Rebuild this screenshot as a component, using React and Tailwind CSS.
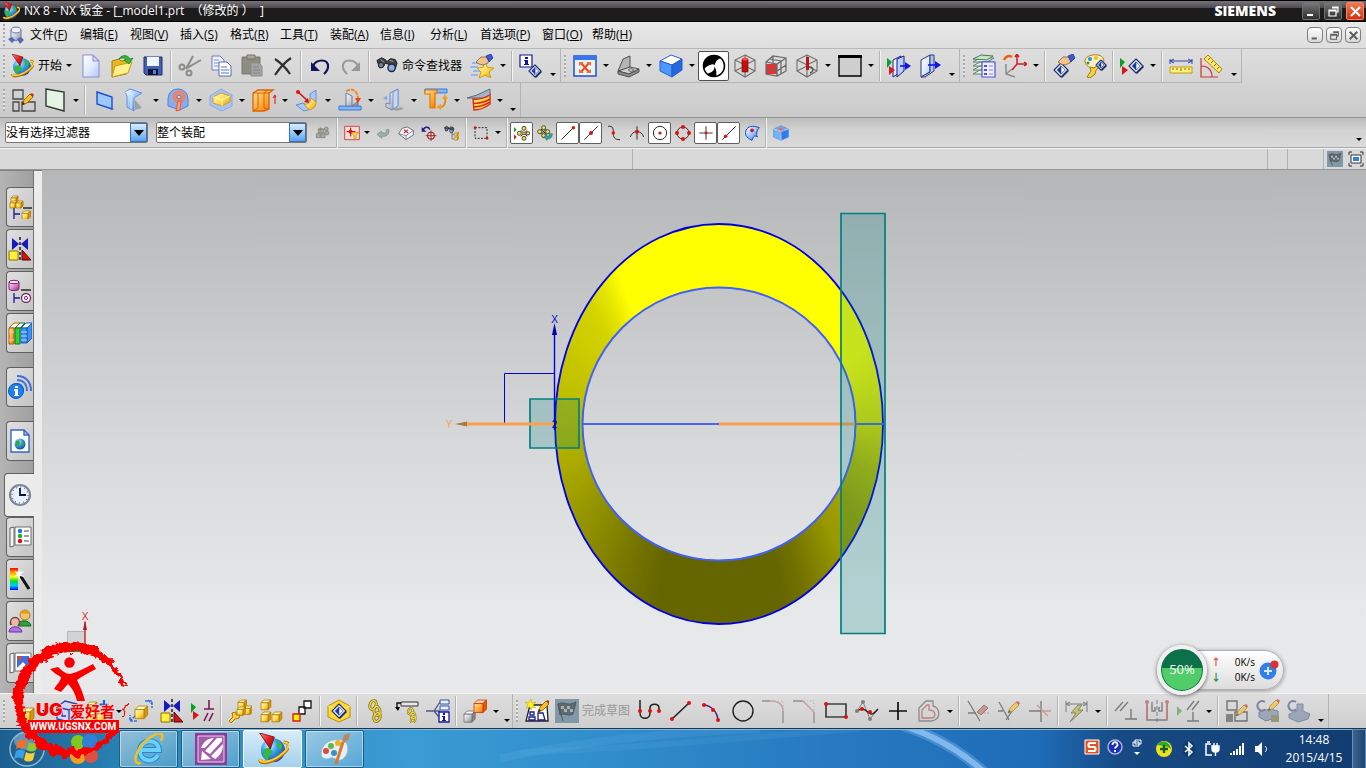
const NAVY = '#1a1a8c';
const UI = "font-['Open_Sans','Noto_Sans_CJK_SC',sans-serif]";

/* ---------- shared bits used by several icons ---------- */

function Defs() {
  const ramps = {
    gBlue: ['#ffffff', '#9cc4ff', '#2b6be8'],
    gPale: ['#ffffff', '#e4ecff', '#b4c6f4'],
    gGold: ['#fffbc0', '#ffe060', '#e09a00'],
    gOrange: ['#ffe6a8', '#ffb040', '#ee6f00'],
    gSteel: ['#ffffff', '#c8ccd4', '#7c8494'],
    gRed: ['#ff9080', '#e02020', '#8c0808'],
    gPink: ['#ffe4fa', '#e08cd0', '#8c2878'],
  };
  return (
    <svg width="0" height="0" className="absolute" aria-hidden="true">
      <defs>
        {Object.entries(ramps).map(([id, c]) => (
          <linearGradient key={id} id={id} x1="0" y1="0" x2="1" y2="1">
            <stop offset="0" stopColor={c[0]} />
            <stop offset=".5" stopColor={c[1]} />
            <stop offset="1" stopColor={c[2]} />
          </linearGradient>
        ))}
        <radialGradient id="gGlobe" cx=".35" cy=".3" r=".8">
          <stop offset="0" stopColor="#d8f4ff" />
          <stop offset=".4" stopColor="#3aa4f0" />
          <stop offset="1" stopColor="#0a3a9c" />
        </radialGradient>
        <linearGradient id="gRainbow" x1="0" y1="0" x2="0" y2="1">
          <stop offset="0" stopColor="#f00" />
          <stop offset=".2" stopColor="#f90" />
          <stop offset=".4" stopColor="#ff0" />
          <stop offset=".6" stopColor="#0d3" />
          <stop offset=".8" stopColor="#0cf" />
          <stop offset="1" stopColor="#00f" />
        </linearGradient>
      </defs>
    </svg>
  );
}

function Cube({ x, y, w = 7, top = '#fffbc0', front = 'url(#gGold)', side = '#d89410', line = '#b07800' }) {
  const d = w * 0.4;
  return (
    <g stroke={line} strokeWidth=".8" strokeLinejoin="round">
      <path d={`M${x} ${y + d}l${d} ${-d}h${w}l${-d} ${d}z`} fill={top} />
      <path d={`M${x + w} ${y + d}l${d} ${-d}v${w}l${-d} ${d}z`} fill={side} />
      <path d={`M${x} ${y + d}h${w}v${w}h${-w}z`} fill={front} />
    </g>
  );
}

function WireIso() {
  return (
    <path d="M12 1l10 5v11l-10 6-10-6V6zM2 6l10 5 10-5M12 11v12M2 17l10-5 10 5M12 1v11" fill="none" stroke="#6c6c6c" strokeWidth="1.1" />
  );
}

function Diamond({ x = 12, y = 12, r = 8 }) {
  return (
    <g transform={`translate(${x} ${y})`} strokeLinejoin="round">
      <path d={`M${-r} 0L0 ${-r}l${r} ${r}l${-r} ${r}z`} fill="#e8eeff" stroke="#20306c" strokeWidth="1.1" />
      <path d={`M${-r * 0.6} 0L0 ${-r * 0.6}v${r * 1.2}z`} fill="#1c3c9c" />
      <path d={`M${r * 0.6} 0L0 ${-r * 0.6}v${r * 1.2}z`} fill="#fff" stroke="#1c3c9c" strokeWidth=".7" />
      <path d={`M0 ${r}l${r} ${-r}l1 1l${-r} ${r}z`} fill="#20306c" />
    </g>
  );
}

function Pencil({ x = 10, y = 1 }) {
  return (
    <g transform={`translate(${x} ${y})`}>
      <path d="M0 12l2-5 6-6 3 3-6 6z" fill="#f8c020" stroke="#8a5400" strokeWidth=".8" />
      <path d="M8 1l2-1 2 2-1 2z" fill="#c03020" />
      <path d="M0 12l1-3 2 2z" fill="#202020" />
    </g>
  );
}

function Dot({ x, y, r = 2, c = '#e01010' }) {
  return <circle cx={x} cy={y} r={r} fill={c} />;
}

function NxGlobe() {
  return (
    <>
      <circle cx="12" cy="13" r="9" fill="url(#gGlobe)" />
      <path d="M5 12l4-1 3 3-3 3-1 4-3-3zM15 5l4 4-1 4-3-3z" fill="#36b83c" />
      <path d="M2 20C3 24 12 22 19 16s5-9 1-9" fill="none" stroke="#b87000" strokeWidth="2.600" />
      <path d="M2 20C3 23 12 21.500 19 15.500s5-8 1-8.500" fill="none" stroke="#ffce3c" strokeWidth="1.500" />
      <path d="M2 0l11 3-3 9z" fill="url(#gRed)" stroke="#7c0410" strokeWidth=".6" />
    </>
  );
}

const Binoculars = () => (
  <>
    <path d="M1 6l5-3 4 2 2 2 4-3 5 1 2 4-2 6-4 2-3-3v-4l-4-1-2 4-4 1z" fill="#3c4048" stroke="#181818" />
    <circle cx="17" cy="14" r="4" fill="#8cacf0" stroke="#202838" strokeWidth="1.500" />
    <circle cx="5.500" cy="11" r="3" fill="#6c7c9c" stroke="#202020" />
    <path d="M5 5l4 3M15 6l4 1" stroke="#b0b8c0" />
  </>
);

const Hand = ({ x = 0, y = 0 }) => (
  <g transform={`translate(${x} ${y})`}>
    <path d="M0 8l5-5h5l3 2-1 4-5 2-4-1z" fill="#f0c48c" stroke="#8c5c2c" strokeWidth=".8" />
    <path d="M10 2l5-2 2 4-4 4z" fill="#3c58d8" stroke="#182c8c" strokeWidth=".7" />
  </g>
);

const Triangles = ({ x = 0, y = 3 }) => (
  <g transform={`translate(${x} ${y})`}>
    <path d="M0 0l5 4-5 6z" fill="#08a028" />
    <path d="M2 8l6 4-6 5z" fill="#d81818" />
  </g>
);

const Mirror = () => (
  <>
    <path d="M4 1l7 6-7 6zM20 1l-7 6 7 6z" fill="#1818c0" />
    <path d="M12 0v24" stroke="#101010" strokeDasharray="3 2" strokeWidth="1.400" />
    <path d="M1 14h9v9H1z" fill="#fff03c" stroke="#8c7000" />
    <path d="M14 13v10h9z" fill="#d01414" stroke="#600" />
  </>
);

const Chain = () => (
  <g fill="none" stroke="#8c7400" strokeWidth="3">
    <ellipse cx="9" cy="6" rx="3" ry="4.500" transform="rotate(20 9 6)" />
    <ellipse cx="13" cy="12" rx="3" ry="4.500" transform="rotate(-10 13 12)" />
    <ellipse cx="13" cy="18" rx="3" ry="4.500" transform="rotate(20 13 18)" />
    <g stroke="#ecd858" strokeWidth="1.400">
      <ellipse cx="9" cy="6" rx="3" ry="4.500" transform="rotate(20 9 6)" />
      <ellipse cx="13" cy="12" rx="3" ry="4.500" transform="rotate(-10 13 12)" />
      <ellipse cx="13" cy="18" rx="3" ry="4.500" transform="rotate(20 13 18)" />
    </g>
  </g>
);

/* ---------- icon drawings, all on a 24 grid ---------- */

const ICONS = {
  new: <path d="M4 1h10l6 6v16H4zM14 1v6h6" fill="url(#gPale)" stroke="#8c94d8" strokeWidth="1.100" />,
  open: (
    <>
      <path d="M2 7l7-2 2 2 7-1v4l-2 10-14 3z" fill="#e8b820" stroke="#a07c08" />
      <path d="M5 12l17-4-4 11-16 4z" fill="#fff08c" stroke="#c49c18" />
      <path d="M9 5c3-5 9-4 11 0l3-1-4 6-5-4 2-.5c-2-2-4-2-7-.5z" fill="#38b838" stroke="#107818" strokeWidth=".7" />
    </>
  ),
  save: (
    <>
      <path d="M3 3h18v18H5l-2-2z" fill="#4460b4" stroke="#202c6c" />
      <path d="M6 3h12v9H6z" fill="#f0f4ff" />
      <path d="M7 15h10v6H7z" fill="#101828" />
      <path d="M12 16h3v4h-3z" fill="#4c80e8" />
    </>
  ),
  cut: (
    <g fill="none" stroke="#8c8c84" strokeWidth="2">
      <path d="M8 15L15 2M9 14l14-8" />
      <circle cx="4" cy="13" r="2.500" />
      <circle cx="11" cy="19" r="2.500" />
    </g>
  ),
  copy: (
    <>
      <path d="M3 2h8l4 4v10H3z" fill="#eef2ff" stroke="#6c7cc0" />
      <path d="M5 6h5M5 9h8M5 12h8" stroke="#8494d0" />
      <path d="M10 8h8l4 4v10H10z" fill="#fff" stroke="#5c6cb8" />
      <path d="M12 13h6M12 16h8M12 19h8" stroke="#4c70d8" />
    </>
  ),
  paste: (
    <>
      <path d="M2 3h18v17H2z" fill="#8c8c80" stroke="#787870" />
      <path d="M7 1h8v4H7z" fill="#a8a89c" stroke="#74746c" />
      <path d="M11 9h8l3 3v10H11z" fill="#a4a4a4" stroke="#8c8c8c" />
      <path d="M13 13h6M13 16h7M13 19h7" stroke="#848484" />
    </>
  ),
  delete: <path d="M4 5c6 4 11 9 15 15M20 4C14 8 8 15 4 21" fill="none" stroke="#303030" strokeWidth="2.200" />,
  undo: (
    <>
      <path d="M5 12c3-7 16-8 15 1 0 3-2 5-4 7" fill="none" stroke="#14145c" strokeWidth="2.200" />
      <path d="M3 8v9h9z" fill="#14145c" />
    </>
  ),
  redo: (
    <>
      <path d="M19 12c-3-7-16-8-15 1 0 3 2 5 4 7" fill="none" stroke="#989898" strokeWidth="2" />
      <path d="M21 8v9h-9z" fill="#989898" />
    </>
  ),
  finder: <Binoculars />,
  role: (
    <>
      <path d="M2 9h9M0 13h8M3 17h7M1 21h7" stroke="#7cb0f0" strokeWidth="1.600" />
      <path d="M15 8l2.500 5.500 6.500.5-5 4 2 6-6-3-6 3 2-6-4-4 6-.5z" fill="url(#gGold)" stroke="#d09c10" />
      <Hand x={6} />
    </>
  ),
  info: (
    <>
      <path d="M1 1h12v12H1z" fill="#fff" stroke="#14149c" strokeWidth="1.200" />
      <path d="M6 3h3v2H6zM5 6h4v4h1v1H5v-1h1V7H5z" fill="#14149c" />
      <Diamond x={16} y={17} r={6} />
    </>
  ),
  fit: (
    <>
      <path d="M1 2h22v20H1z" fill="#eaf2ff" stroke="#2450c8" strokeWidth="1.500" />
      <path d="M1 2h22v4H1z" fill="#3c74ec" />
      <path d="M8 9l8 9M16 9l-8 9" stroke="#e85010" strokeWidth="2" />
      <path d="M6 8h5l-5 4zM18 8h-5l5 4zM6 19h5l-5-4zM18 19h-5l5-4z" fill="#f07028" />
    </>
  ),
  orient: (
    <>
      <path d="M2 17L7 5l7-3v11l-8 5z" fill="#b4b4b4" stroke="#505050" />
      <path d="M2 17l12-4 9 2-10 5z" fill="#d0d0d0" stroke="#505050" />
      <path d="M2 17v3l11 3 10-5v-3l-10 5z" fill="#8c8c8c" stroke="#505050" />
      <ellipse cx="15" cy="16" rx="2.500" ry="1.200" fill="#fff" stroke="#505050" />
    </>
  ),
  blueCube: (
    <g stroke="#2c5cd0" strokeLinejoin="round">
      <path d="M1 7l11-6 11 4-10 6z" fill="#fff" />
      <path d="M1 7l12 4v12L1 17z" fill="#4c98ff" />
      <path d="M23 5L13 11v12l10-7z" fill="#2468e0" />
    </g>
  ),
  shaded: (
    <>
      <circle cx="12" cy="12" r="10.500" fill="#fff" stroke="#000" strokeWidth="1.500" />
      <path d="M19 4C14 6 13 9 13 11 10 9 5 12 2 15-1 7 5 1 12 1.500c3 0 5 1 7 2.500zM12 12c1 3 0 6-7 8 3 3 7 3 9 2 1-4 0-7-2-10z" fill="#000" />
    </>
  ),
  bore1: (
    <>
      <WireIso />
      <path d="M9 5h6v13H9z" fill="#c41010" stroke="#700" strokeWidth=".6" />
      <ellipse cx="12" cy="5" rx="3" ry="1.500" fill="#f05040" />
    </>
  ),
  bore2: (
    <>
      <path d="M2 10h11v10H2z" fill="#e83030" />
      <path d="M2 8l7-6 13 2v13l-9 5-11-2zM2 8l11 2 9-6M13 10v12M6 5l11 2v13M22 11l-9 6-11-2M9 2v12" fill="none" stroke="#686868" strokeWidth="1.200" />
    </>
  ),
  bore3: (
    <>
      <WireIso />
      <path d="M11 3h3v13h-3z" fill="#c41010" />
      <path d="M14 13c5-1 5 5 1 6" fill="none" stroke="#555" strokeWidth="1.300" />
    </>
  ),
  backdrop: (
    <>
      <path d="M1 2h22v20H1z" fill="#cfcfcf" stroke="#000" strokeWidth="1.300" />
      <path d="M0 1h24v3H0z" />
    </>
  ),
  clipToggle: (
    <>
      <path d="M6 6l8-4v16l-8 5z" fill="url(#gPale)" stroke={NAVY} />
      <path d="M10 5l7-3v15l-7 6z" fill="#b8d0fc" stroke={NAVY} />
      <path d="M13 12h6" stroke="#1414e0" strokeWidth="1.600" />
      <path d="M18 8l6 4-6 4z" fill="#1414e0" />
      <Triangles y={4} />
    </>
  ),
  clipEdit: (
    <>
      <path d="M3 6l9-5v17l-9 5z" fill="url(#gPale)" stroke="#303870" />
      <path d="M12 1h4v16l-9 6H3l9-5z" fill="#a8c8fc" stroke="#303870" />
      <path d="M10 11h9" stroke="#1414e0" strokeWidth="1.600" />
      <path d="M17 7l6 4-6 4z" fill="#1414e0" />
    </>
  ),
  layers: (
    <>
      <path d="M1 20l7-4h14l-7 4zM1 16l7-4h14l-7 4zM1 12l7-4h14l-7 4zM1 8l7-4h14l-7 4z" fill="#eaf4ea" stroke="#60846c" />
      <path d="M1 5l8-4 12 1-6 4z" fill="#c4e4c8" stroke="#4c7858" />
      <path d="M10 8h13v15H10z" fill="#eef0ff" stroke="#5050e0" strokeWidth="1.200" />
      <path d="M12 11h3v2h-3zM12 15h3v2h-3zM12 19h3v2h-3z" fill="#5050e0" />
      <path d="M17 12h4M17 16h4M17 20h4" stroke="#8080d0" />
    </>
  ),
  csys: (
    <g fill="none" strokeWidth="1.500">
      <path d="M3 10v10l9 3M3 20l6-5" stroke="#8c8c8c" />
      <path d="M14 1v9h9M14 10l-5 6M12 3l2-3 2 3M21 8l3 2-3 2" stroke="#d02020" />
      <path d="M1 6c2-4 5-5 8-3" stroke="#f06010" strokeWidth="2.500" />
    </g>
  ),
  showHide: (
    <>
      <Diamond x={9} y={16} r={7} />
      <Hand x={6} y={0} />
    </>
  ),
  palette: (
    <>
      <path d="M2 8C1 3 8 0 15 1c6 1 8 7 3 9-3 1-3 4-7 4S3 12 2 8z" fill="#fff0c0" stroke="#b07810" />
      <Dot x={7} y={5} c="#2090f0" />
      <Dot x={13} y={4} c="#f0c010" />
      <Dot x={5} y={9} r={1.5} c="#20a040" />
      <path d="M4 23l4-6-1-4 4 1 5-4 2 2-5 4-1 4-5 4z" fill="#f8d040" stroke="#a07c08" />
      <Diamond x={18} y={11} r={5} />
    </>
  ),
  immediate: (
    <>
      <Triangles y={4} />
      <Diamond x={16} y={12} r={7} />
    </>
  ),
  ruler: (
    <>
      <path d="M1 7h22M1 5v5M23 5v5M5 5L1 7l4 2M19 5l4 2-4 2" fill="none" stroke="#2c48a8" />
      <path d="M1 13h22v6H1z" fill="#fff07c" stroke="#c49c10" />
      <path d="M4 14v2M8 14v2M12 14v3M16 14v2M20 14v2" stroke="#80640c" />
    </>
  ),
  angle: (
    <>
      <path d="M1 4v19h17M1 12c7 0 11 4 11 11" fill="none" stroke="#d03434" strokeWidth="1.200" />
      <path d="M8 1l14 14-3 4L4 5z" fill="#ffe868" stroke="#a8840c" />
      <path d="M10 4l-2 2M13 7l-2 2M16 10l-2 2M19 13l-2 2" stroke="#80640c" />
    </>
  ),
  /* sheet metal row */
  sketchTask: (
    <>
      <path d="M1 2h10v9H1zM1 14h6v9H1zM10 14h13v9H10z" fill="none" stroke="#484848" strokeWidth="1.300" />
      <Pencil x={10} y={5} />
    </>
  ),
  sheet: <path d="M3 1l18 3v19L3 18z" fill="#e4f4e4" stroke="#303830" strokeWidth="1.400" />,
  tab: (
    <>
      <path d="M20 20l3 1-5 2z" fill="#a8a8a8" />
      <path d="M5 4l15 5v12L5 16z" fill="#9cc8ff" stroke="#1c50d0" strokeWidth="1.400" />
    </>
  ),
  contourFlange: (
    <>
      <path d="M12 12l7 8-7 2z" fill="#a0a0a0" />
      <path d="M2 4l5-3 12 4-5 3c-3 1-3 3-3 5v10l-7-4V8z" fill="url(#gBlue)" stroke="#5c94e0" />
      <path d="M2 4l8 3c-1 1-2 2-2 5v9" fill="none" stroke="#e0ecff" />
    </>
  ),
  dimple: (
    <>
      <path d="M2 12C2 4 7 1 12 1s10 3 10 11v6l-8 4-12-4z" fill="#88acf0" stroke="#5480d8" />
      <circle cx="13" cy="9" r="5" fill="none" stroke="#f08060" strokeWidth="3" />
      <path d="M12 13l-2 10 4-1 1-9z" fill="#ffa078" stroke="#e05c30" />
      <circle cx="13" cy="9" r="2" fill="#ffd0b0" stroke="#d04818" />
    </>
  ),
  emboss: (
    <>
      <path d="M1 8l11-7 11 6v11l-10 5-12-6z" fill="#a8c4f4" stroke="#88a8e4" />
      <path d="M4 9l8-4 9 3v6l-8 4-9-3z" fill="url(#gGold)" stroke="#d0a020" />
      <path d="M4 9l9 3 8-4M13 12v6" fill="none" stroke="#fff8b0" />
    </>
  ),
  louver: (
    <>
      <path d="M1 5l5-3h15l-4 3v16l-5 2H1z" fill="url(#gOrange)" stroke="#e06000" strokeWidth="1.300" />
      <path d="M6 5v15l-5 3M12 5v15l5 1M1 5h16M12 5l4-3" fill="none" stroke="#e06000" />
      <path d="M23 8v8M21 10l2-3 1 3" stroke="#e01010" fill="none" />
    </>
  ),
  bend: (
    <>
      <path d="M1 17l7-2 8 6-7 2zM15 6l6-4v12l-6 5z" fill="#a8c8f8" stroke="#6090d8" />
      <path d="M9 16c4 1 6-1 7-6l5 4c0 5-3 7-7 8z" fill="url(#gGold)" stroke="#d89020" />
      <path d="M3 4l10 9" stroke="#d81010" strokeWidth="1.600" />
      <Dot x={3} y={4} />
      <path d="M14 15l-5-1 4-4z" fill="#d81010" />
    </>
  ),
  jog: (
    <>
      <path d="M1 18h22v4H1z" fill="#80b4f8" stroke="#3c78d8" />
      <path d="M8 18V5l6 3v10zM14 18l6-5v5z" fill="url(#gSteel)" stroke="#6c7c98" />
      <path d="M8 3c6-3 12-1 12 8" fill="none" stroke="#f08010" strokeWidth="1.800" strokeDasharray="4 1" />
      <path d="M17 10h6l-3 5z" fill="#f04010" />
    </>
  ),
  corner: (
    <>
      <path d="M12 21l8-2 3 2-8 2z" fill="#a0a0a0" />
      <path d="M9 5l8-4v17l-6 4-6-3v-4l4 1z" fill="url(#gSteel)" stroke="#7488b0" />
      <path d="M12 4l5-3v17l-5 3z" fill="#c4d8f8" stroke="#7898d0" />
      <path d="M2 10l4-2v4z" fill="#70a4f0" />
    </>
  ),
  unbend: (
    <>
      <path d="M1 1h22v4H1z" fill="#80b4f8" stroke="#3c78d8" />
      <path d="M1 2h12v3h-2v15H6V6H1z" fill="url(#gOrange)" stroke="#e07800" strokeWidth="1.200" />
      <path d="M15 19c5 1 7-4 6-9" fill="none" stroke="#e88c10" strokeWidth="2" />
      <path d="M18 11l3-5 3 5zM17 16v6l-5-3z" fill="#f0a020" />
    </>
  ),
  formed: (
    <>
      <path d="M0 10l10-3L23 1v6l-7 3z" fill="#a4b4c4" stroke="#58687c" />
      <path d="M6 11c7 1 12-1 17-4v9c-5 4-10 6-16 6z" fill="#ffe050" stroke="#e02818" strokeWidth="1.400" />
      <path d="M6 15c7 1 12-1 17-4M6 19c7 0 12-2 17-5" fill="none" stroke="#e02818" strokeWidth="1.500" />
    </>
  ),
  /* selection bar */
  interpart: (
    <g fill="#a8a8a0" stroke="#787870">
      <path d="M5 6h8v6H5zM2 13h6v6H2zM9 13h6v6H9zM8 3v6M5 6h7" />
      <circle cx="17" cy="6" r="3" />
      <circle cx="18" cy="12" r="3" />
    </g>
  ),
  filter: (
    <>
      <path d="M1 2h22v20H1z" fill="#f8dada" stroke="#d84040" strokeWidth="1.400" />
      <path d="M10 4v13M4 10h13" stroke="#900" strokeWidth="1.500" />
      <Dot x={10} y={10} r={3} />
      <path d="M11 11h11l-4 5v6l-3-2v-4z" fill="#ffd040" stroke="#b08000" strokeWidth=".8" />
    </>
  ),
  resetFilter: <path d="M3 14l7-5v3h7V7h4c0 8-3 10-11 10v3z" fill="#9cb4ac" stroke="#70887c" />,
  deselect: (
    <>
      <path d="M1 13L6 5l8-2 9 5v7l-11 7z" fill="#f0f2f8" stroke="#5c6474" strokeWidth="1.300" />
      <path d="M1 13l11 3 11-8M12 16v6" fill="none" stroke="#5c6474" />
      <path d="M9 12l6-5M9 7l6 5" stroke="#d02020" strokeWidth="1.600" />
    </>
  ),
  allowLimit: (
    <>
      <path d="M3 8c2-6 9-6 10-1" fill="none" stroke={NAVY} strokeWidth="2" />
      <path d="M1 3v7h7z" fill={NAVY} />
      <circle cx="15" cy="16" r="5" fill="none" stroke="#c01818" strokeWidth="1.600" />
      <path d="M15 8v16M7 16h16" stroke="#802020" strokeWidth="1.300" />
    </>
  ),
  findTree: (
    <>
      <g transform="scale(.65)">
        <Binoculars />
      </g>
      <path d="M12 10v11h4M12 14h4" fill="none" stroke="#4c4c8c" />
      <Cube x={16} y={11} w={4} />
      <Cube x={16} y={17} w={4} />
    </>
  ),
  marquee: (
    <>
      <path d="M3 4h18v16H3z" fill="none" stroke="#202020" strokeWidth="1.400" strokeDasharray="3 2" />
      <Dot x={3} y={4} />
      <Dot x={21} y={20} />
    </>
  ),
  snapOn: (
    <>
      <path d="M0 3l4 4-4 4z" fill="#08a028" />
      <path d="M0 14l4 4-4 4z" fill="#d81818" />
      <g fill="#f8e040" stroke="#202020" strokeWidth="1.200">
        <circle cx="15" cy="5" r="3" />
        <circle cx="15" cy="20" r="3" />
        <circle cx="8" cy="12.500" r="3" />
        <circle cx="21" cy="12.500" r="2.500" />
      </g>
      <path d="M10 8l10 9M20 8L10 17" stroke="#202020" strokeWidth="1.500" />
      <circle cx="15" cy="12.500" r="2" fill="#ffe040" stroke="#303030" />
    </>
  ),
  snapReset: (
    <>
      <g fill="#f8e040" stroke="#303030" strokeWidth="1.200">
        <circle cx="10" cy="4" r="3" />
        <circle cx="4" cy="10" r="3" />
        <circle cx="16" cy="10" r="3" />
        <circle cx="10" cy="16" r="3" />
      </g>
      <path d="M6 6l8 8M14 6l-8 8" stroke="#303030" strokeWidth="1.500" />
      <path d="M10 18l5-4v3h3v-4h5c0 6-3 8-8 8v2z" fill="#40a0a0" stroke="#206c6c" strokeWidth=".8" />
    </>
  ),
  endPoint: (
    <>
      <path d="M2 22L20 4" stroke="#303030" strokeWidth="1.500" />
      <Dot x={20} y={4} r={2.6} />
    </>
  ),
  midPoint: (
    <>
      <path d="M2 22L22 2" stroke="#303030" strokeWidth="1.500" />
      <Dot x={12} y={12} r={3} />
    </>
  ),
  control: (
    <>
      <path d="M3 2c8-1 8 4 8 10s1 10 10 10" fill="none" stroke="#303030" strokeWidth="1.500" />
      <Dot x={11} y={12} r={2.6} />
    </>
  ),
  intersection: (
    <>
      <path d="M12 2v20M2 18C5 7 19 7 22 18" fill="none" stroke="#303030" strokeWidth="1.500" />
      <Dot x={12} y={10} r={3} />
    </>
  ),
  arcCenter: (
    <>
      <circle cx="12" cy="12" r="10" fill="none" stroke="#303030" strokeWidth="1.500" />
      <Dot x={12} y={12} r={2.4} />
    </>
  ),
  quadrant: (
    <>
      <circle cx="12" cy="12" r="9" fill="none" stroke="#303030" strokeWidth="1.500" />
      <Dot x={12} y={3} r={3} />
      <Dot x={12} y={21} r={3} />
      <Dot x={3} y={12} r={3} />
      <Dot x={21} y={12} r={3} />
    </>
  ),
  existing: (
    <>
      <path d="M12 2v20M2 12h20" stroke="#404040" strokeWidth="1.600" />
      <Dot x={12} y={12} r={2.2} />
    </>
  ),
  onCurve: (
    <>
      <path d="M2 22L22 2" stroke="#303030" strokeWidth="1.500" />
      <Dot x={7} y={17} r={2.6} />
    </>
  ),
  onFace: (
    <>
      <path d="M4 6c5-6 13-4 19-2-4 4-5 9-3 14-4-3-6-1-8 5C3 19 0 13 4 6z" fill="url(#gBlue)" stroke="#1c48b8" strokeWidth="1.500" />
      <Dot x={12} y={8} r={2.8} />
    </>
  ),
  facet: (
    <>
      <path d="M1 6l11-5 11 5v12l-11 5-11-5z" fill="#70b4f8" stroke="#5090d8" />
      <path d="M12 10l11-4v12l-11 5z" fill="#2c7cf0" />
      <path d="M1 6l11 4 11-4M12 10v13" fill="none" stroke="#d8e8ff" />
      <path d="M6 4l12 5M18 4L6 8M12 2v14" stroke="#e06060" />
    </>
  ),
  /* resource bar tabs */
  asmNav: (
    <>
      <Cube x={3} y={1} w={5} />
      <Cube x={2} y={6} w={5} />
      <Cube x={8} y={6} w={5} />
      <path d="M15 13h9" stroke="#000" strokeWidth="1.200" />
      <path d="M6 13v11M6 19h6" stroke={NAVY} strokeWidth="1.300" />
      <Cube x={14} y={16} w={6} />
    </>
  ),
  constraintNav: <Mirror />,
  partNav: (
    <>
      <path d="M1 3v7c0 2 10 2 10 0V3z" fill="url(#gPink)" stroke="#7c2468" />
      <ellipse cx="6" cy="3" rx="5" ry="1.700" fill="#ffe0f8" stroke="#7c2468" />
      <path d="M13 11h10" stroke="#000" strokeWidth="1.200" />
      <path d="M6 14v10M6 19h6" stroke={NAVY} strokeWidth="1.300" />
      <circle cx="18" cy="19" r="4.500" fill="#fff" stroke="#7c2468" strokeWidth="1.300" />
      <circle cx="18" cy="19" r="1.600" fill="none" stroke="#7c2468" />
    </>
  ),
  library: (
    <>
      <path d="M1 7l5-5h6L7 7z" fill="#fff" stroke="#c86000" />
      <path d="M1 7h5v16H1z" fill="url(#gOrange)" stroke="#b85800" />
      <path d="M7 7l5-5h5l-5 5z" fill="#fff" stroke="#107818" />
      <path d="M7 7h5v16H7z" fill="#30d038" stroke="#107818" />
      <path d="M13 7l5-5h6l-5 5z" fill="#fff" stroke="#1860b8" />
      <path d="M13 7h6v15h-6zM19 7l5-5v15l-5 5z" fill="#3c90f0" stroke="#1860b8" />
      <path d="M1 11h5M1 19h5M13 11h6M13 15h6M13 19h6" stroke="#c0d8f8" />
    </>
  ),
  hdInfo: (
    <>
      <path d="M9 1c9 0 14 6 14 15M9 5c6 0 10 4 10 11M9 9c4 0 6 2 6 7" fill="none" stroke="#4070d8" strokeWidth="2" />
      <circle cx="8" cy="16" r="7.500" fill="#1c80f0" stroke="#1058b8" />
      <path d="M7 11h3v2H7zM6 14h4v6h1v1H6v-1h1v-4H6z" fill="#fff" />
    </>
  ),
  browser: (
    <>
      <path d="M3 1h13l5 5v17H3zM16 1v5h5" fill="#fff" stroke="#3464c8" strokeWidth="1.400" />
      <circle cx="12" cy="15" r="5.500" fill="url(#gGlobe)" />
      <path d="M8 12l3-1 1 3-2 4-2-2zM14 12l3 2-2 4z" fill="#38a838" />
    </>
  ),
  history: (
    <>
      <circle cx="12" cy="12" r="10" fill="#e8f0ff" stroke="#808894" strokeWidth="2.200" />
      <circle cx="12" cy="12" r="8" fill="none" stroke="#303848" strokeDasharray="1 3.200" />
      <path d="M12 5v7h6" fill="none" stroke="#101828" strokeWidth="1.800" />
    </>
  ),
  materials: (
    <>
      <path d="M2 3l4-1v19l-4 1z" fill="#f4f4f4" stroke="#606060" />
      <path d="M7 2h16v18H7z" fill="#fff" stroke="#707070" />
      <Dot x={12} y={6} r={2.2} c="#1c74e8" />
      <Dot x={12} y={11} r={2.2} c="#20b030" />
      <Dot x={12} y={16} r={2.2} />
      <path d="M16 6h5M16 11h5M16 16h5" stroke="#404040" />
    </>
  ),
  visual: (
    <>
      <path d="M2 1h8v22H2z" fill="url(#gRainbow)" />
      <path d="M12 8l9 14" stroke="#101010" strokeWidth="3" />
      <path d="M11 1l1 4 4-1-3 3 3 3-4-1-1 4-1-4-4 1 3-3-3-3 4 1z" fill="#fff" />
    </>
  ),
  roles: (
    <>
      <path d="M10 17c0-7 12-7 13 0z" fill="#30a038" stroke="#186820" />
      <circle cx="17" cy="6" r="5" fill="#f8c070" stroke="#b07820" />
      <path d="M12 5c1-6 9-5 10 0-3 0-6-1-10 0z" fill="#d8a020" />
      <path d="M1 23c0-7 12-7 13 0z" fill="#b070e8" stroke="#6c30a0" />
      <path d="M2 16c-2-11 12-11 10 0z" fill="#604858" />
      <circle cx="7" cy="13" r="3.800" fill="#f4b898" />
    </>
  ),
  template: (
    <>
      <path d="M2 3l4-1v19l-4 1z" fill="#f4f4f4" stroke="#606060" />
      <path d="M7 2h16v18H7z" fill="#fff" stroke="#707070" />
      <path d="M9 5h12v12H9z" fill="#3c70e0" />
      <path d="M9 5h4v7z" fill="#f04020" />
      <path d="M9 17l6-6 6 6z" fill="#f8f8f8" />
    </>
  ),
  /* assembly row */
  findComp: <Cube x={8} y={9} w={10} />,
  wireCube: (
    <g fill="none" stroke="#2c3ca8" strokeWidth="1.300">
      <path d="M2 8l8-6 12 3v12l-8 6-12-3z" fill="#cfd8f8" />
      <path d="M2 8l12 3 8-6M14 11v12M7 12v5h4" />
    </g>
  ),
  addComp: (
    <>
      <Cube x={1} y={3} w={7} />
      <Cube x={1} y={13} w={7} />
      <Cube x={11} y={12} w={7} />
      <path d="M18 1v9M13.500 5.500h9" stroke="#1c60e0" strokeWidth="2.200" />
    </>
  ),
  moveComp: (
    <>
      <Cube x={6} y={7} w={9} />
      <path d="M16 2h7v7M19 1l4 4M8 22H1v-6M1 22l5-5" fill="none" stroke="#3070d8" strokeWidth="1.500" strokeDasharray="3 1" />
    </>
  ),
  constraints: <Mirror />,
  showDof: (
    <>
      <Triangles y={4} />
      <path d="M18 1v9M13 10h10M13 22l4-8M18 22l4-8" stroke="#7c1858" strokeWidth="1.600" />
    </>
  ),
  arrange: (
    <>
      <Cube x={10} y={1} w={6} />
      <Cube x={16} y={7} w={6} />
      <Cube x={9} y={8} w={6} />
      <path d="M1 22l4-4-1-4 4-1v3h4l-1 3-4 1-4 4z" fill="#ffd040" stroke="#a87800" />
    </>
  ),
  pattern: (
    <>
      <Cube x={2} y={1} w={7} />
      <Cube x={2} y={13} w={7} />
      <Cube x={13} y={13} w={7} />
    </>
  ),
  sequence: (
    <g fill="#fff" stroke="#101010" strokeWidth="1.300">
      <path d="M14 2h7v7h-7zM9 8h6v7H9z" />
      <path d="M3 15h7v7H3z" fill="#fff000" stroke="#e01010" />
    </g>
  ),
  product: (
    <>
      <path d="M1 7l11-6 11 6v11l-11 5-11-5z" fill="#ffd838" stroke="#b88c08" />
      <path d="M1 7l11 5 11-5" fill="none" stroke="#fff090" />
      <Diamond x={12} y={12} r={7} />
    </>
  ),
  wave: <Chain />,
  waveLink: (
    <>
      <path d="M6 3h17v4H6z" fill="#e8e8e8" stroke="#303030" />
      <path d="M6 4H2v6" fill="none" stroke="#101010" strokeWidth="1.400" />
      <path d="M0 8h5l-2 4z" />
      <g transform="translate(9 8) scale(.7)">
        <Chain />
      </g>
    </>
  ),
  relations: (
    <>
      <path d="M0 12h8l6-9M8 12h6M8 12l5 6" fill="none" stroke="#4c5c84" strokeWidth="1.300" />
      <path d="M14 1h9v4h-9zM14 7h9v4h-9z" fill="#e8f0ff" stroke="#34549c" />
      <path d="M13 13h10v10H13z" fill="#fff" stroke="#14149c" strokeWidth="1.300" />
      <path d="M17 14h2v2h-2zM16 17h3v4h1v1h-4v-1h1v-3h-1z" fill="#14149c" />
    </>
  ),
  replace: (
    <>
      <Cube x={1} y={12} w={8} top="#f4f4f4" front="url(#gSteel)" side="#888" line="#707070" />
      <Cube x={11} y={1} w={9} top="#ffe0a0" front="url(#gOrange)" side="#e06000" line="#d02810" />
    </>
  ),
  /* sketch row */
  sketch: (
    <>
      <path d="M5 6h17l1 16H1z" fill="#fff" stroke="#202020" strokeWidth="1.300" />
      <path d="M5 13h4v3H5zM4 18h6v3H4zM13 21v-7h5l2 7z" fill="none" stroke={NAVY} strokeWidth="1.300" />
      <path d="M6 0l1 4 4-1-3 3 3 3-4-1-1 3-1-3-4 1 2-3-3-3 4 1z" fill="#fff020" stroke="#c0a000" strokeWidth=".5" />
      <Pencil x={13} y={1} />
    </>
  ),
  finish: (
    <>
      <path d="M0 0h24v24H0z" fill="#8098a8" />
      <path d="M3 5c6-3 10 3 18-2l-3 12c-6 3-9-2-13 1zM3 5l5 17" fill="#606870" stroke="#50585c" />
      <path d="M6 7h3v3H6zM12 7h3v3h-3zM9 10h3v3H9zM15 10h3v3h-3z" fill="#a8b0b4" />
    </>
  ),
  profile: (
    <>
      <path d="M2 1v13c0 7 10 7 10 0V9c0-5 9-5 9 0v3" fill="none" stroke="#202020" strokeWidth="1.500" />
      <Dot x={2} y={12} />
      <Dot x={12} y={12} />
      <Dot x={21} y={12} />
    </>
  ),
  line: (
    <>
      <path d="M3 20L20 4" stroke="#202020" strokeWidth="1.500" />
      <Dot x={3} y={20} />
      <Dot x={20} y={4} />
    </>
  ),
  arc: (
    <>
      <path d="M4 6c8 1 13 7 14 15" fill="none" stroke="#501878" strokeWidth="1.500" />
      <Dot x={4} y={6} />
      <Dot x={13} y={11} />
      <Dot x={18} y={21} />
    </>
  ),
  circle: <circle cx="12" cy="12" r="10" fill="none" stroke="#202020" strokeWidth="1.400" />,
  fillet: (
    <>
      <path d="M0 2h8M21 12v12" stroke="#606060" strokeWidth="1.300" />
      <path d="M8 2c9 0 13 4 13 10" fill="none" stroke="#c07878" strokeWidth="1.500" />
      <path d="M10 2h11v9" fill="none" stroke="#989898" strokeDasharray="1 2" />
    </>
  ),
  chamfer: (
    <>
      <path d="M0 2h10M21 13v11" stroke="#606060" strokeWidth="1.300" />
      <path d="M10 2l11 11" stroke="#c07878" strokeWidth="1.500" />
      <path d="M11 2h10v10" fill="none" stroke="#989898" strokeDasharray="1 2" />
    </>
  ),
  rectangle: (
    <>
      <path d="M2 5h20v13H2z" fill="none" stroke="#404040" strokeWidth="1.700" />
      <Dot x={2} y={5} />
      <Dot x={22} y={18} />
    </>
  ),
  spline: (
    <>
      <path d="M2 12l6-9 7 17 8-10" fill="none" stroke="#808080" />
      <path d="M2 12c6-4 8-1 12 2s6-1 9-4" fill="none" stroke="#202020" strokeWidth="1.400" />
      <Dot x={8} y={3} c="#808080" />
      <Dot x={15} y={20} c="#808080" />
      <Dot x={2} y={12} c="#808080" />
      <Dot x={7} y={10} />
      <Dot x={15} y={13} />
    </>
  ),
  point: <path d="M12 3v18M3 12h18" stroke="#101010" strokeWidth="1.700" />,
  offset: (
    <g fill="none" strokeWidth="1.300">
      <path d="M2 9l7-7h7v5c7 1 9 14-2 15H2z" stroke="#8c8c8c" />
      <path d="M5 11l5-5h2v5c7 0 8 8 2 8H5z" stroke="#c08080" />
    </g>
  ),
  trim: (
    <>
      <path d="M2 2l12 20M2 14h8" stroke="#404040" strokeWidth="1.300" />
      <path d="M12 14h11" stroke="#c07070" strokeDasharray="2 1" />
      <path d="M11 13l7-7 4 3-7 7z" fill="#c07070" stroke="#604040" />
    </>
  ),
  extend: (
    <>
      <path d="M2 3l5 9 5 9M9 21L21 3M1 12h5" fill="none" stroke="#404040" strokeWidth="1.300" />
      <Pencil x={11} y={2} />
    </>
  ),
  makeCorner: (
    <>
      <path d="M13 2v21M1 12h12" stroke="#404040" strokeWidth="1.400" />
      <path d="M13 12h10M9 6l11 11" stroke="#c07070" strokeWidth="1.300" />
    </>
  ),
  autoDim: (
    <>
      <path d="M1 2v11M22 2v11M1 5h21M5 3L1 5l4 2M18 3l4 2-4 2" fill="none" stroke="#404040" />
      <path d="M13 6L6 14h5L5 23l13-12h-5l4-5z" fill="#b4b430" stroke="#50501c" />
    </>
  ),
  geomConstr: <path d="M1 12l8-9M6 12l8-9M17 10v10M11 20h12" stroke="#404040" strokeWidth="1.400" />,
  symmetric: (
    <>
      <path d="M2 3v18h20V3M7 3v9h3V8M17 3v9h-3V8" fill="none" stroke="#484848" strokeWidth="1.400" />
      <path d="M12 1v23" stroke="#404080" strokeDasharray="4 2" />
      <path d="M2 3v17M22 3v17" stroke="#b04848" strokeWidth="1.800" />
      <Dot x={2} y={3} c="#b04848" />
      <Dot x={22} y={3} c="#b04848" />
    </>
  ),
  showConstr: (
    <>
      <path d="M1 7l5 5-5 5z" fill="#40a050" />
      <path d="M11 11l7-9M16 11l7-9M17 13v9M11 22h12" stroke="#404040" strokeWidth="1.400" />
    </>
  ),
  editSketch: (
    <>
      <path d="M2 2h10v9H2zM10 13h12v9H10z" fill="none" stroke="#303030" strokeWidth="1.400" />
      <path d="M1 15h7v8H1z" fill="#505050" />
      <Pencil x={11} y={5} />
    </>
  ),
  reattach: (
    <>
      <path d="M9 3C4 0 0 5 2 9s6 3 7 1" fill="none" stroke="#404c80" strokeWidth="2" />
      <path d="M3 13l11-3 8 2v6L10 22l-7-4z" fill="#7888a8" stroke="#404c68" />
      <Pencil x={12} y={0} />
      <path d="M15 16h8v7h-8z" fill="#707040" />
    </>
  ),
  updateModel: (
    <>
      <path d="M9 3C4 0 0 5 2 9s6 3 7 1" fill="none" stroke="#404c80" strokeWidth="2" />
      <path d="M2 15l8-3V5h6v7l7 3-2 5-10 3-9-4z" fill="#7888a8" stroke="#505c78" />
    </>
  ),
  nx: <NxGlobe />,
};

function Icon({ name, size = 'size-6' }) {
  return (
    <svg viewBox="0 0 24 24" fill="#000" className={`${size} shrink-0`} aria-hidden="true">
      {ICONS[name]}
    </svg>
  );
}

/* ---------- toolbar pieces ---------- */

const Arrow = () => <span className="h-0 w-0 border-x-3 border-t-3 border-x-transparent border-t-black" />;

const Separator = () => <span className="h-[30px] w-[6px] shrink-0 bg-[linear-gradient(90deg,transparent_2px,#b4b4b4_2px,#b4b4b4_3px,#f4f4f4_3px,#f4f4f4_4px,transparent_4px)]" />;

const Grip = () => (
  <span className="h-[22px] w-2 shrink-0 bg-[repeating-linear-gradient(180deg,#a8a8a8_0_2px,#e8e8e8_2px_4px)] bg-size-[2px_100%] bg-center bg-no-repeat" />
);

function Overflow({ narrow }) {
  return (
    <button aria-label="Toolbar options" className={`flex h-full shrink-0 items-end justify-center pb-1.5 ${narrow ? 'w-2.5' : 'w-3.5'}`}>
      <Arrow />
    </button>
  );
}

// "|" is a separator, a trailing ">" adds a drop-down arrow, "*" draws the pressed frame, "-" disables
function Tools({ items }) {
  return items.map((item, i) => {
    if (item === '|') return <Separator key={i} />;
    const name = item.replace(/[>*-]/g, '');
    return (
      <span key={i} className="flex shrink-0 items-center">
        <button
          aria-label={name}
          className={`flex h-[30px] w-[31px] items-center justify-center ${item.includes('*') ? 'rounded-xs border border-[#505050] bg-white' : ''} ${item.includes('-') ? 'opacity-60' : ''}`}
        >
          <Icon name={name} />
        </button>
        {item.includes('>') && (
          <button aria-label={`${name} options`} className="flex h-[30px] w-3 items-center justify-center">
            <Arrow />
          </button>
        )}
      </span>
    );
  });
}

function Group({ children, last }) {
  return <div className={`flex h-full shrink-0 items-center border-r border-[#b4b4b4] ${last ? 'border-b' : ''}`}>{children}</div>;
}

// same marks as Tools, with "<" for the tighter arrow
function SnapTools({ items }) {
  return items.map((item, i) => {
    if (item === '|') return <Separator key={i} />;
    const name = item.replace(/[<>*]/g, '');
    return (
      <span key={i} className="flex shrink-0 items-center">
        <button
          aria-label={name}
          className={`flex h-[22px] w-[23px] items-center justify-center ${item.includes('*') ? 'rounded-xs border border-[#606060] bg-white' : ''}`}
        >
          <Icon name={name} size="size-4" />
        </button>
        {/[<>]/.test(item) && (
          <button aria-label={`${name} options`} className={`flex h-[22px] items-center justify-center ${item.includes('<') ? 'w-2' : 'w-3'}`}>
            <Arrow />
          </button>
        )}
      </span>
    );
  });
}

function Combo({ label, value, width }) {
  return (
    <div className={`relative h-[21px] shrink-0 rounded-xs border border-[#787878] bg-white ${width}`}>
      <select aria-label={label} className="block h-full w-full appearance-none bg-transparent text-xs text-black outline-none" defaultValue={value}>
        <option>{value}</option>
      </select>
      <span className="pointer-events-none absolute inset-y-0 right-0 flex w-[17px] items-center justify-center border border-[#3c70b0] bg-linear-to-b from-[#d8ecff] to-[#58a4f0]">
        <span className="h-0 w-0 border-x-5 border-t-6 border-x-transparent border-t-black" />
      </span>
    </div>
  );
}

/* ---------- bars ---------- */

const MENUS = [
  ['文件', 'F'], ['编辑', 'E'], ['视图', 'V'], ['插入', 'S'], ['格式', 'R'], ['工具', 'T'],
  ['装配', 'A'], ['信息', 'I'], ['分析', 'L'], ['首选项', 'P'], ['窗口', 'O'], ['帮助', 'H'],
];

const RESTORE = 'M5 2h6v5H9M2 5h7v6H2zM2 6h7M5 3h6';
const CLOSE = 'M2 2l9 9M11 2l-9 9';
const MINIMIZE = 'M2 10h6';

function TitleBar() {
  return (
    <header className="flex h-[22px] items-center border-y border-black bg-[linear-gradient(#757378,#4c4a50_7px,#1c1c1c_7px)] pl-0.5 text-white">
      <Icon name="nx" size="size-[18px]" />
      <h1 className="ml-1 text-xs whitespace-pre">NX 8 - NX 钣金 - [_model1.prt  （修改的 ）  ]</h1>
      <span className="mr-[26px] ml-auto text-sm font-extrabold">SIEMENS</span>
      <div className="flex gap-1 pr-0.5">
        {[['Minimize', MINIMIZE], ['Restore', RESTORE], ['Close', CLOSE]].map(([name, d]) => (
          <button
            key={name}
            aria-label={name}
            className={`flex h-[18px] w-[18px] items-center justify-center rounded-xs border ${name === 'Close' ? 'border-[#f08868] bg-linear-to-b from-[#f07850] to-[#d82c10]' : 'border-[#707070] bg-linear-to-b from-[#787878] to-[#303030]'}`}
          >
            <svg viewBox="0 0 13 13" className="size-[13px]" fill="none" stroke="#fff" strokeWidth={name === 'Restore' ? 1.2 : 2}>
              <path d={d} />
            </svg>
          </button>
        ))}
      </div>
    </header>
  );
}

function MenuBar() {
  return (
    <nav className="flex h-[27px] items-center border-b border-[#b8b8b8] bg-linear-to-b from-[#e8e8e8] to-[#dedede]">
      <Grip />
      <svg viewBox="0 0 16 18" className="mr-1.5 h-[18px] w-4" aria-hidden="true">
        <path d="M3 4v8l5 3 5-3V4z" fill="url(#gSteel)" stroke="#7078a8" />
        <ellipse cx="8" cy="4" rx="5" ry="3" fill="#f0f2ff" stroke="#7078a8" />
        <path d="M0 13l4-2 3 3-3 3zM9 13l4-2 3 3-4 4z" fill="#5868b0" />
      </svg>
      {MENUS.map(([text, key]) => (
        <button key={key} className={`shrink-0 text-left text-xs text-black ${text.length === 3 ? 'w-[62px]' : 'w-[50px]'}`}>
          {text}(<u>{key}</u>)
        </button>
      ))}
      <div className="ml-auto flex gap-[3px] pr-[5px]">
        {[['Minimize part', MINIMIZE], ['Restore part', RESTORE], ['Close part', CLOSE]].map(([name, d]) => (
          <button key={name} aria-label={name} className="flex size-4 items-center justify-center rounded-sm border border-[#808080] bg-linear-to-b from-white to-[#d8d8d8]">
            <svg viewBox="0 0 13 13" className="size-[11px]" fill="none" stroke="#606060" strokeWidth={name === 'Restore part' ? 1.3 : 2.4}>
              <path d={d} />
            </svg>
          </button>
        ))}
      </div>
    </nav>
  );
}

function StandardBar() {
  return (
    <div className="flex h-[34px] items-center">
      <Group last>
        <Grip />
        <button className="flex h-[30px] w-[67px] items-center gap-1 pl-0.5 text-xs">
          <Icon name="nx" />
          <span>开始</span>
          <Arrow />
        </button>
        <Tools items={['new', 'open', 'save', '|', 'cut', 'copy', 'paste', 'delete', '|', 'undo', 'redo', '|']} />
        <button className="flex h-[30px] w-[94px] items-center gap-1 pl-1 text-xs whitespace-nowrap">
          <Icon name="finder" size="size-[22px]" />
          命令查找器
        </button>
        <Tools items={['role>', '|', 'info']} />
        <Overflow />
      </Group>
      <Group last>
        <Grip />
        <Tools items={['fit>', 'orient>', 'blueCube>', 'shaded*', 'bore1', 'bore2', 'bore3>', 'backdrop>', '|', 'clipToggle', 'clipEdit']} />
        <Overflow />
      </Group>
      <Group last>
        <Grip />
        <Tools items={['layers', 'csys>', '|', 'showHide', 'palette', '|', 'immediate>', '|', 'ruler', 'angle']} />
        <Overflow />
      </Group>
    </div>
  );
}

function SheetMetalBar() {
  return (
    <div className="flex h-[35px] items-center border-b border-[#949494]">
      <Group>
        <Grip />
        <Tools
          items={['sketchTask', 'sheet>', '|', 'tab', 'contourFlange>', 'dimple>', 'emboss>', 'louver>', 'bend>', 'jog>', 'corner>', 'unbend>', 'formed>']}
        />
        <Overflow />
      </Group>
    </div>
  );
}

function SelectionBar() {
  return (
    <div className="flex h-[30px] items-center border-b border-[#a8a8a8] bg-[linear-gradient(#bcbcbc,#d2d2d2_12px,#dadada)] pl-[5px]">
      <Combo label="Type filter" value="没有选择过滤器" width="w-[143px]" />
      <span className="w-2 shrink-0" />
      <Combo label="Selection scope" value="整个装配" width="w-[151px]" />
      <span className="w-1 shrink-0" />
      <SnapTools items={['interpart', '|', 'filter<', 'resetFilter', 'deselect', 'allowLimit', 'findTree', '|', 'marquee>', '|']} />
      <SnapTools
        items={['snapOn*', 'snapReset', 'endPoint*', 'midPoint*', 'control', 'intersection', 'arcCenter*', 'quadrant', 'existing*', 'onCurve*', 'onFace', '|', 'facet']}
      />
      <span className="ml-auto flex h-full">
        <Overflow />
      </span>
    </div>
  );
}

function CueLine() {
  return (
    <div className="flex h-[22px] items-stretch border-t border-b border-t-[#f4f4f4] border-b-[#949494] bg-[#d9d9d9]">
      <span className="grow-[633] border-r border-[#b0b0b0]" />
      <span className="grow-[635] border-r border-[#b0b0b0]" />
      <span className="w-5 border-r border-[#b0b0b0]" />
      <span className="w-9 border-r border-[#b0b0b0]" />
      <div className="flex w-[42px] items-center justify-around">
        <Icon name="finish" size="size-4" />
        <button aria-label="Full screen">
          <svg viewBox="0 0 16 16" className="size-4" fill="none" stroke="#303030">
            <path d="M1 4V1h3M12 1h3v3M15 12v3h-3M4 15H1v-3" />
            <path d="M3 4h10v8H3z" fill="#fff" />
            <path d="M5 6h6v4H5z" fill="#3080e0" stroke="none" />
          </svg>
        </button>
      </div>
    </div>
  );
}

/* ---------- resource bar ---------- */

const TABS = [
  ['asmNav', 'constraintNav', 'partNav', 'library'],
  ['hdInfo'],
  ['browser'],
  ['history', 'materials', 'visual', 'roles', 'template'],
];

function ResourceBar() {
  return (
    <aside className="flex shrink-0 border-t border-[#808080]">
      <div className="flex w-[34px] flex-col items-end gap-3.5 border-r border-[#707070] bg-linear-to-r from-[#b4b4b4] to-[#a0a0a0] pt-4">
        {TABS.map((group, i) => (
          <div key={i} className="flex flex-col items-end gap-0.5">
            {group.map((name) => (
              <button
                key={name}
                aria-label={name}
                className={
                  name === 'history'
                    ? '-my-0.5 -mr-px flex h-11 w-[30px] items-center justify-center rounded-l-sm border border-r-0 border-[#606060] bg-[#ececec]'
                    : 'flex h-10 w-[27px] items-center justify-center rounded-l-sm border border-r-0 border-[#606060] bg-linear-to-br from-[#e0e0e0] to-[#c4c4c4]'
                }
              >
                <Icon name={name} />
              </button>
            ))}
          </div>
        ))}
      </div>
      <div className="w-2 bg-[#ebebeb]" />
    </aside>
  );
}

/* ---------- graphics window ---------- */

// yellow level around the ring, by angle (0 = right, counter-clockwise)
const SHADE = [
  [0, 221], [12, 240], [24, 255], [128, 255], [135, 230], [142, 212], [160, 198], [180, 184], [200, 162],
  [220, 136], [236, 114], [247, 102], [293, 102], [302, 116], [318, 152], [330, 162], [345, 186], [360, 221],
];

function shadeAt(deg) {
  const k = SHADE.findIndex(([a]) => a > deg);
  const [a0, v0] = SHADE[k - 1];
  const [a1, v1] = SHADE[k];
  return Math.round(v0 + ((v1 - v0) * (deg - a0)) / (a1 - a0));
}

const CX = 719;
const CY = 424;
const R_IN = 136;

function ringFacets() {
  const step = 1;
  const pt = (deg, rx, ry) => {
    const t = (deg * Math.PI) / 180;
    return `${(CX + rx * Math.cos(t)).toFixed(2)} ${(CY - ry * Math.sin(t)).toFixed(2)}`;
  };
  const facets = [];
  for (let a = 0; a < 360; a += step) {
    const v = shadeAt(a);
    const b = a + step * 1.6;
    facets.push({
      key: a,
      fill: `rgb(${v},${v},0)`,
      d: `M${pt(a, R_IN, R_IN)}L${pt(a, 164, 200)}L${pt(b, 164, 200)}L${pt(b, R_IN, R_IN)}z`,
    });
  }
  return facets;
}

const FACETS = ringFacets();

function Viewport() {
  return (
    <main className="min-w-0 flex-1 bg-[linear-gradient(#b5b6b8,#d7d8da_52%,#e6e7e9_82%,#e8e9eb)]">
      <svg viewBox="42 170 1324 523" className="h-full w-full" role="img" aria-label="Model view">
        {FACETS.map((f) => (
          <path key={f.key} d={f.d} fill={f.fill} />
        ))}
        <ellipse cx={CX} cy={CY} rx="164" ry="200" fill="none" stroke="#0000e0" strokeWidth="1.800" />
        <circle cx={CX} cy={CY} r="136.500" fill="none" stroke="#4060f8" strokeWidth="2" />
        <path d="M583 424h136M856 424h28" stroke="#4868e8" strokeWidth="2" />
        <path d="M719 424h136" stroke="#f8a050" strokeWidth="3" />
        <g fill="#008080" fillOpacity=".22" stroke="#008080" strokeWidth="1.700">
          <path d="M841 213.500h44v420h-44z" />
          <path d="M530 399h49v49h-49z" />
        </g>
        <path d="M504.500 424v-50.500h50" fill="none" stroke="#0000e8" />
        <path d="M554.500 430V330" stroke="#0000e8" strokeWidth="1.400" />
        <path d="M554.500 323l2.500 12h-5z" fill="#0000b0" />
        <path d="M465 424h89" stroke="#f8a050" strokeWidth="3" />
        <path d="M455 424l12-2.500v5z" fill="#a87840" />
        <g className="font-['Liberation_Sans',sans-serif] text-[10px]" textAnchor="middle">
          <text x="554.500" y="323" fill="#0000e8">X</text>
          <text x="449" y="428" fill="#f8a050">Y</text>
          <text x="554.500" y="428" fill="#0000a0">2</text>
          <text x="85" y="620" fill="#c83038">X</text>
        </g>
        <path d="M67.500 631.500h17v17h-17z" fill="#d0d2d4" stroke="#b4b6b8" />
        <path d="M85 650v-28" stroke="#c83038" strokeWidth="1.500" />
        <path d="M85 620l2 10h-4z" fill="#b02028" />
        <path d="M85 651h-20" stroke="#209030" strokeWidth="2" />
        <Dot x={85} y={651} r={3} c="#1c30c0" />
      </svg>
    </main>
  );
}

/* ---------- bottom bars ---------- */

function BottomBar() {
  return (
    <div className="flex h-[35px] shrink-0 items-center border-t border-[#f4f4f4] bg-linear-to-b from-[#dedede] to-[#cecece]">
      <Group>
        <Grip />
        <Tools
          items={['findComp>', 'wireCube', 'addComp>', 'moveComp', 'constraints', 'showDof', '|', 'arrange', 'pattern', 'sequence', '|', 'product', '|', 'wave', 'waveLink', 'relations', '|', 'replace>']}
        />
        <Overflow narrow />
      </Group>
      <Group>
        <Grip />
        <Tools items={['sketch']} />
        <button disabled className="flex h-[30px] w-[82px] items-center gap-[3px] pl-[3px] text-xs whitespace-nowrap text-[#989898]">
          <Icon name="finish" />
          完成草图
        </button>
        <Tools
          items={['profile', 'line', 'arc', 'circle', 'fillet-', 'chamfer-', 'rectangle', 'spline', 'point', 'offset>', '|', 'trim-', 'extend-', 'makeCorner-', '|', 'autoDim>-', '|', 'geomConstr-', 'symmetric-', 'showConstr>-', '|', 'editSketch-', 'reattach-', 'updateModel-']}
        />
        <Overflow />
      </Group>
    </div>
  );
}

function TaskButton({ label, active, children }) {
  return (
    <button
      aria-label={label}
      className={`flex h-[38px] w-[59px] items-center justify-center rounded-xs border ${active ? 'border-white bg-linear-to-b from-[#d8ecf8] to-[#a4d0ec]' : 'border-[#1c5c88] bg-linear-to-br from-white/50 to-white/15 shadow-[inset_0_0_0_1px_#ffffff70]'}`}
    >
      {children}
    </button>
  );
}

function Tray() {
  return (
    <div className="flex items-center gap-2.5 text-white">
      <svg viewBox="0 0 62 20" className="h-5 w-[62px]" role="img" aria-label="Input method">
        <path d="M2 1h14v14H2z" fill="#e8501c" stroke="#fff" />
        <path d="M13 4H7c-2 0-2 4 0 4h4c2 0 2 4 0 4H5" fill="none" stroke="#fff" strokeWidth="2.200" />
        <circle cx="32" cy="8" r="7" fill="#1830b8" stroke="#a8b0d8" strokeWidth="1.500" />
        <path d="M29.500 6c0-4 5-3.500 5 0 0 1.500-2.500 2-2.500 3.500M32 11v2" fill="none" stroke="#fff" strokeWidth="1.800" />
        <path d="M52 1h6v4h-6zM50 3h6v4h-6z" fill="#1c4c84" stroke="#fff" />
        <path d="M51 13h6l-3 3z" fill="#fff" />
      </svg>
      <svg viewBox="0 0 18 18" className="size-[18px]" role="img" aria-label="Security">
        <circle cx="9" cy="9" r="8" fill="#f0e020" />
        <path d="M2 5c4-6 13-4 14 4-5-4-9-3-14-4z" fill="#30a830" />
        <path d="M9 5v8M5 9h8" stroke="#0c6018" strokeWidth="2.400" />
      </svg>
      <svg viewBox="0 0 12 16" className="h-4 w-3" role="img" aria-label="Bluetooth">
        <rect width="12" height="16" rx="6" fill="#0c3c70" />
        <path d="M2 5l7 6-3 3V2l3 3-7 6" fill="none" stroke="#fff" strokeWidth="1.500" />
      </svg>
      <svg viewBox="0 0 15 16" className="h-4 w-[15px]" fill="none" stroke="#fff" role="img" aria-label="Power">
        <path d="M6 3H1v11h6M2 1h3" strokeWidth="1.500" />
        <path d="M7 5h7v3c0 4-7 4-7 0zM9 2v3M12 2v3M10.500 11v4" fill="#fff" strokeWidth="1.400" />
      </svg>
      <svg viewBox="0 0 15 12" className="h-3 w-[15px]" fill="#fff" role="img" aria-label="Network">
        <path d="M0 10h2v2H0zM3 8h2v4H3zM6 6h2v6H6zM9 3h2v9H9zM12 0h2v12h-2z" />
      </svg>
      <svg viewBox="0 0 13 14" className="h-3.5 w-[13px]" role="img" aria-label="Volume">
        <path d="M0 4h3l4-4v14l-4-4H0z" fill="#fff" />
        <path d="M10 4c2 2 2 4 0 6" fill="none" stroke="#fff" />
      </svg>
    </div>
  );
}

function Taskbar() {
  return (
    <footer className="relative flex h-10 shrink-0 items-center overflow-hidden border-t border-[#183850] bg-[linear-gradient(90deg,#1c5f90,#2a86b8_10%,#3a9cd4_30%,#3290cc_42%,#2678c0_62%,#1f6cb8_76%,#174a84_82%,#123c70)]">
      <svg viewBox="0 0 1366 40" preserveAspectRatio="none" className="absolute inset-0 h-full w-full" aria-hidden="true">
        <path d="M500 30C580 14 650 4 760 0" fill="none" stroke="#80c4f0" strokeOpacity=".12" strokeWidth="8" />
        <path d="M520 24C640 20 720 10 860 0" fill="none" stroke="#80c4f0" strokeOpacity=".1" strokeWidth="6" />
        <path d="M895-6C930 4 958 20 984 44" fill="none" stroke="#98ccff" strokeOpacity=".3" strokeWidth="11" />
        <path d="M895-6C930 4 958 20 984 44" fill="none" stroke="#a8d4ff" strokeOpacity=".6" strokeWidth="6" />
        <path d="M0 .5h1366" stroke="#88b8dc" />
      </svg>
      <div className="relative flex w-full items-center">
        <button aria-label="Start" className="ml-2 flex size-[38px] items-center justify-center">
          <svg viewBox="0 0 38 38" className="size-[38px]">
            <circle cx="19" cy="19" r="17" fill="#24608c" stroke="#88b8d4" strokeWidth="1.500" />
            <ellipse cx="19" cy="11" rx="13" ry="9" fill="#a0cce4" fillOpacity=".5" />
            <path d="M10 11c3-2 6-2 9 0l-2 8c-3-2-6-2-9 0z" fill="#f07030" />
            <path d="M21 12c3 2 6 2 9 0l-2 8c-3 2-6 2-9 0z" fill="#90c830" />
            <path d="M8 21c3-2 6-2 9 0l-2 8c-3-2-6-2-9 0z" fill="#38a0e8" />
            <path d="M18 22c3 2 6 2 9 0l-2 8c-3 2-6 2-9 0z" fill="#f8d038" />
          </svg>
        </button>
        <button aria-label="Desktop assistant" className="mr-[19px] ml-[22px] h-[38px] w-8">
          <svg viewBox="0 0 32 32" className="size-8">
            <circle cx="10" cy="9" r="7" fill="#80c820" />
            <circle cx="22" cy="9" r="8" fill="#3080d8" />
            <circle cx="10" cy="23" r="8" fill="#f0a020" />
            <circle cx="23" cy="23" r="7" fill="#e05040" />
          </svg>
        </button>
        <div className="flex gap-[3px]">
          <TaskButton label="Internet Explorer">
            <svg viewBox="0 0 32 32" className="size-8">
              <path d="M25 22C20 31 6 28 7 17S25 5 26 17H9" fill="none" stroke="#2488d0" strokeWidth="6" />
              <path d="M25 22C20 31 6 28 7 17S25 5 26 17H9" fill="none" stroke="#6cd0fc" strokeWidth="4" />
              <path d="M8 30C-3 33 4 14 15 6S32-1 28 8" fill="none" stroke="#f0c020" strokeWidth="2.600" />
            </svg>
          </TaskButton>
          <TaskButton label="Editor">
            <svg viewBox="0 0 32 32" className="size-8">
              <path d="M0 0h32v32H0z" fill="#8c3c98" />
              <path d="M3 3h26v26H3z" fill="#a45cac" stroke="#e8d0ec" />
              <g fill="#fff">
                <path d="M6 15C8 9 13 5 19 5l-9 10z" />
                <path d="M10 18L22 5h5v3L15 21z" />
                <path d="M16 23L28 11c0 6-2 11-8 15z" />
                <path d="M7 18l9 8-10 1z" />
              </g>
            </svg>
          </TaskButton>
          <TaskButton label="NX" active>
            <Icon name="nx" size="size-8" />
          </TaskButton>
          <TaskButton label="Paint">
            <svg viewBox="0 0 32 32" className="size-8">
              <path d="M2 20C3 9 14 5 23 7c8 2 8 16-1 20-4 2-6-3-10-2-5 2-10 1-10-5z" fill="#e4f0f8" stroke="#90b8d0" />
              <circle cx="7" cy="18" r="3" fill="#e04838" />
              <circle cx="12" cy="13" r="3" fill="#60b840" />
              <circle cx="19" cy="10" r="3" fill="#f0b020" />
              <circle cx="15" cy="20" r="3" fill="#3c90c8" />
              <path d="M17 31l7-22" stroke="#d87828" strokeWidth="3" />
              <path d="M23 8l2-6 6-2-1 6-5 4z" fill="#b88860" />
            </svg>
          </TaskButton>
        </div>
        <div className="ml-auto flex items-center">
          <Tray />
          <div className="mr-2 ml-4 w-[60px] text-center text-xs leading-[18px] text-white">
            <time className="block">14:48</time>
            <time className="block">2015/4/15</time>
          </div>
          <button aria-label="Show desktop" className="h-10 w-3.5 border border-[#6890b4] bg-linear-to-r from-[#3c648c] to-[#1c4470]" />
        </div>
      </div>
    </footer>
  );
}

/* ---------- floating pieces ---------- */

function SpeedBall() {
  return (
    <div className="absolute right-[82px] bottom-[73px] flex items-center">
      <div className="z-10 flex size-[50px] items-center justify-center rounded-full border-4 border-[#f0f0f0] bg-[linear-gradient(#0c7048_46%,#50cc68_46%)] text-[13px] text-white shadow-[0_1px_4px_#00000090,inset_0_0_0_1px_#0c7048]">
        50%
      </div>
      <div className="-ml-6 flex h-10 w-[101px] items-center justify-end gap-1 rounded-r-full border border-[#b0b0b0] bg-linear-to-b from-white to-[#dcdcdc] pr-1 text-[10px] leading-[15px] text-black shadow-[0_1px_4px_#00000060]">
        <div className="mr-auto ml-[27px] font-bold">
          <p className="text-[#e8503c]">↑</p>
          <p className="text-[#1c9048]">↓</p>
        </div>
        <div>
          <p>0K/s</p>
          <p>0K/s</p>
        </div>
        <svg viewBox="0 0 20 20" className="size-5" aria-hidden="true">
          <circle cx="9" cy="11" r="8.500" fill="#3080e8" />
          <path d="M9 7v8M5 11h8" stroke="#d8e8ff" strokeWidth="2" />
          <circle cx="15.500" cy="4.500" r="4" fill="#e03030" />
        </svg>
      </div>
    </div>
  );
}

function Stamp() {
  return (
    <svg viewBox="10 638 120 122" className="pointer-events-none absolute bottom-2 left-2.5 h-[122px] w-[120px]" role="img" aria-label="UG爱好者 WWW.UGSNX.COM">
      <defs>
        <filter id="brush" x="-5%" y="-5%" width="110%" height="110%">
          <feTurbulence type="fractalNoise" baseFrequency=".16" numOctaves="3" seed="7" />
          <feDisplacementMap in="SourceGraphic" scale="9" xChannelSelector="R" yChannelSelector="G" />
        </filter>
      </defs>
      <g filter="url(#brush)">
        <path d="M124 684A56 57 0 1 0 118 729L116 727A51 49 0 1 1 121 683z" fill="#f80000" stroke="#f80000" strokeWidth="1.500" />
        <path d="M126 704c0 5-1 9-3 14" fill="none" stroke="#f80000" strokeWidth="2" />
      </g>
      <g fill="#f80000">
        <path d="M28 720h91v13H28z" />
        <circle cx="69.500" cy="662.500" r="5.200" />
        <path d="M50 669l8-2c4 4 8 7 12 7 8-2 15-6 23-10l3 5c-7 4-14 7-19 11 3 6 6 13 8 21h-8c-2-8-5-13-9-17-3 3-5 6-7 8l-7-3c3-5 7-8 7-12-4-2-8-5-11-8z" />
      </g>
      <g fill="#f80000" stroke="#f8dcdc" strokeWidth="1" paintOrder="stroke">
        <text x="36" y="716" className="font-['Inter',sans-serif] text-[18px] font-black">UG</text>
        <text x="70" y="717" className="font-['Noto_Sans_CJK_SC',sans-serif] text-[15px] font-bold">爱好者</text>
      </g>
      <text x="73" y="730" textAnchor="middle" fill="#fff" className="font-['Roboto',sans-serif] text-[10px] font-bold">
        WWW.UGSNX.COM
      </text>
    </svg>
  );
}

export default function App() {
  return (
    <div className={`relative flex h-screen flex-col overflow-hidden bg-[#d0d0d0] text-black ${UI}`}>
      <Defs />
      <TitleBar />
      <MenuBar />
      <div className="shrink-0 bg-linear-to-b from-[#dedede] to-[#cacaca]">
        <StandardBar />
        <SheetMetalBar />
      </div>
      <SelectionBar />
      <CueLine />
      <div className="flex min-h-0 flex-1">
        <ResourceBar />
        <Viewport />
      </div>
      <BottomBar />
      <Taskbar />
      <SpeedBall />
      <Stamp />
    </div>
  );
}
